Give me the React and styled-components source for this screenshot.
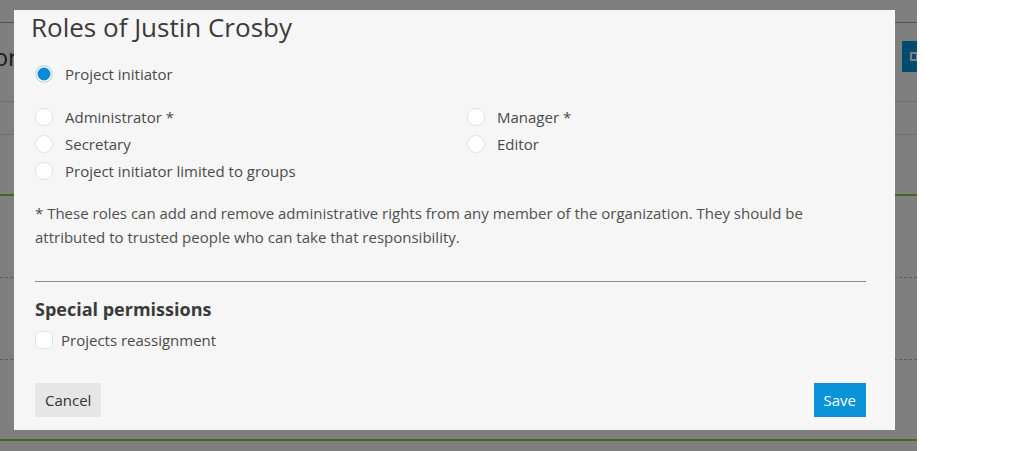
import React, { useState } from 'react';
import styled, { createGlobalStyle } from 'styled-components';

const GlobalStyle = createGlobalStyle`
  html, body {
    margin: 0;
    padding: 0;
    background: #fff;
    font-family: 'Open Sans', 'Liberation Sans', sans-serif;
  }
  * {
    box-sizing: border-box;
  }
`;

const Page = styled.div`
  position: relative;
  width: 917px;
  height: 451px;
  overflow: hidden;
  background: #fff;
`;

const TopBar = styled.div`
  height: 23px;
  border-bottom: 1px solid #a4a4a4;
`;

const Header = styled.div`
  height: 79px;
  display: flex;
  align-items: flex-start;
  justify-content: space-between;
  border-bottom: 1px solid #dcdcdc;
`;

const HeaderTitle = styled.div`
  margin: 19px 0 0 -49px;
  font-size: 24px;
  line-height: 30px;
  color: #3a3a3a;
  white-space: nowrap;
`;

const HeaderButton = styled.div`
  margin-top: 18px;
  width: 34px;
  height: 31px;
  margin-right: -19px;
  background: #0096e0;
  display: flex;
  align-items: center;
  padding-left: 8px;

  span {
    width: 8px;
    height: 9px;
    border: 2px solid #fff;
    border-radius: 1px;
  }
`;

const BgRow = styled.div`
  height: ${({ h }) => h}px;
  border-bottom: ${({ line }) => line};
`;

const Overlay = styled.div`
  position: absolute;
  inset: 0;
  background: rgba(0, 0, 0, 0.5);
  padding: 10px 0 0 14px;
`;

const Modal = styled.div`
  width: 881px;
  height: 420px;
  background: #f6f6f6;
  padding: 0 29px 13px 21px;
  display: flex;
  flex-direction: column;
`;

const Title = styled.h2`
  margin: 0 0 15px -4px;
  font-size: 26px;
  line-height: 35px;
  font-weight: 400;
  color: #3b3b3b;
`;

const RoleGrid = styled.div`
  display: grid;
  grid-template-columns: 432px 1fr;
  margin-top: 16px;
`;

const Option = styled.label`
  display: flex;
  align-items: center;
  gap: 12px;
  height: 27px;
  font-size: 15px;
  color: #4a4a4a;
  cursor: pointer;
`;

const Radio = styled.span`
  width: 18px;
  height: 18px;
  border-radius: 50%;
  border: 1px solid #e2e2e2;
  background: ${({ checked }) => (checked ? '#0a8ad4' : '#fff')};
  box-shadow: inset 0 0 0 1.5px #fff;
  flex-shrink: 0;
`;

const Check = styled.span`
  width: 18px;
  height: 18px;
  border-radius: 4px;
  border: 1px solid #e2e2e2;
  background: #fff;
  flex-shrink: 0;
`;

const Note = styled.p`
  margin: 17px 0 0;
  font-size: 15px;
  line-height: 24px;
  color: #4f4f4f;
`;

const Divider = styled.hr`
  margin: 32px 0 0;
  border: none;
  border-top: 1px solid #8c8c8c;
  width: 831px;
`;

const SectionTitle = styled.h3`
  margin: 15px 0 4px;
  font-size: 18px;
  line-height: 25px;
  font-weight: 700;
  color: #3a3a3a;
`;

const CheckOption = styled(Option)`
  gap: 8px;
`;

const Footer = styled.div`
  margin-top: auto;
  width: 831px;
  display: flex;
  justify-content: space-between;
`;

const Button = styled.button`
  height: 34px;
  padding: 0 10px;
  border: none;
  font-family: inherit;
  font-size: 15px;
  background: ${({ primary }) => (primary ? '#0a93d9' : '#e6e6e6')};
  color: ${({ primary }) => (primary ? '#fff' : '#333')};
  cursor: pointer;
`;

const roles = [
  ['Administrator *', 'Manager *'],
  ['Secretary', 'Editor'],
  ['Project initiator limited to groups', null],
];

export default function App() {
  const [role, setRole] = useState('Project initiator');

  return (
    <>
      <GlobalStyle />
      <Page>
        <TopBar />
        <Header>
          <HeaderTitle>Editor</HeaderTitle>
          <HeaderButton>
            <span />
          </HeaderButton>
        </Header>
        <BgRow h={33} line="1px solid #dcdcdc" />
        <BgRow h={61} line="2px solid #8fcd3c" />
        <BgRow h={82} line="1px dashed #b8b8b8" />
        <BgRow h={82} line="1px dashed #b8b8b8" />
        <BgRow h={81} line="2px solid #8fcd3c" />

        <Overlay>
          <Modal>
            <Title>Roles of Justin Crosby</Title>
            <Option onClick={() => setRole('Project initiator')}>
              <Radio checked={role === 'Project initiator'} />
              Project initiator
            </Option>
            <RoleGrid>
              {roles.flat().map((r, i) =>
                r ? (
                  <Option key={r} onClick={() => setRole(r)}>
                    <Radio checked={role === r} />
                    {r}
                  </Option>
                ) : (
                  <span key={i} />
                )
              )}
            </RoleGrid>
            <Note>
              * These roles can add and remove administrative rights from any member of the
              organization. They should be attributed to trusted people who can take that
              responsibility.
            </Note>
            <Divider />
            <SectionTitle>Special permissions</SectionTitle>
            <CheckOption>
              <Check />
              Projects reassignment
            </CheckOption>
            <Footer>
              <Button>Cancel</Button>
              <Button primary>Save</Button>
            </Footer>
          </Modal>
        </Overlay>
      </Page>
    </>
  );
}
